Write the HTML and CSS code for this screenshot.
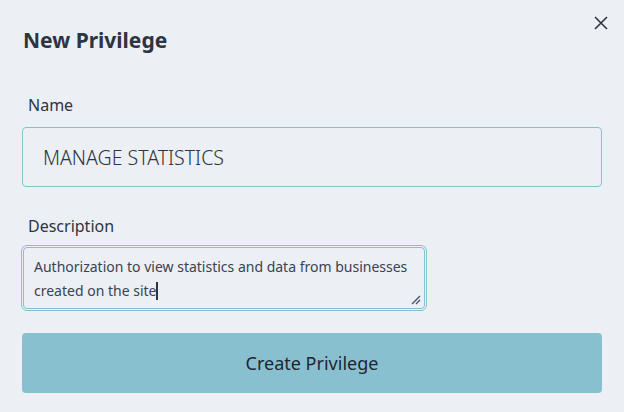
FILE: index.html
```html
<!DOCTYPE html>
<html>
<head>
<meta charset="utf-8">
<link rel="stylesheet" href="styles.css">
</head>
<body>
<div class="modal">
  <button class="close" aria-label="Close">
    <svg width="14" height="14" viewBox="0 0 14 14"><path d="M1 1L13 13M13 1L1 13" stroke="#2e3440" stroke-width="1.6" fill="none"/></svg>
  </button>
  <h1 class="title">New Privilege</h1>
  <div class="field">
    <label class="label">Name</label>
    <div class="input">MANAGE STATISTICS</div>
  </div>
  <div class="field">
    <label class="label">Description</label>
    <div class="textarea">Authorization to view statistics and data from businesses created on the site<span class="caret"></span>
      <svg class="grip" width="10" height="10" viewBox="0 0 10 10"><path d="M1 9L9 1M5 9L9 5" stroke="#4c566a" stroke-width="1.4"/></svg>
    </div>
  </div>
  <button class="submit">Create Privilege</button>
</div>
</body>
</html>
```
FILE: styles.css
```css
* { box-sizing: border-box; }
html, body { margin: 0; padding: 0; }
body {
  background: #eceff4;
  font-family: "Noto Sans", "Open Sans", sans-serif;
  color: #2e3440;
  width: 624px;
  height: 412px;
  overflow: hidden;
}
.modal {
  position: relative;
  padding: 24px 22px 0 22px;
  display: flex;
  flex-direction: column;
}
.close {
  position: absolute;
  top: 16px;
  right: 16px;
  background: none;
  border: 0;
  padding: 0;
  width: 14px;
  height: 14px;
  display: flex;
}
.title {
  margin: 0 0 0 1px;
  font-size: 21px;
  font-weight: 700;
  line-height: 32px;
  height: 32px;
}
.field {
  display: flex;
  flex-direction: column;
}
.label {
  font-size: 16px;
  line-height: 22px;
  margin: 38px 0 0 6px;
  color: #2e3440;
}
.field + .field .label { margin-top: 28px; }
.input {
  margin-top: 11px;
  height: 60px;
  border: 1px solid #88c0d0;
  border-radius: 4px;
  padding: 0 20px;
  display: flex;
  align-items: center;
  font-size: 19.5px;
  font-weight: 300;
  color: #2e3440;
}
.textarea {
  position: relative;
  margin-top: 10px;
  width: 402px;
  height: 62px;
  border: 1px solid #88c0d0;
  outline: 1.5px solid #88c0d0;
  outline-offset: 1px;
  border-radius: 4px;
  padding: 7px 10px 0 10px;
  font-size: 14px;
  line-height: 24px;
  color: #3b4252;
  margin-left: 1px;
}
.caret {
  display: inline-block;
  width: 1.5px;
  height: 18px;
  background: #2e3440;
  vertical-align: -4px;
}
.grip {
  position: absolute;
  right: 3px;
  bottom: 3px;
}
.submit {
  margin-top: 24px;
  height: 60px;
  background: #88c0d0;
  border: 0;
  border-radius: 4px;
  font-family: inherit;
  font-size: 18px;
  color: #1f2530;
}
```
